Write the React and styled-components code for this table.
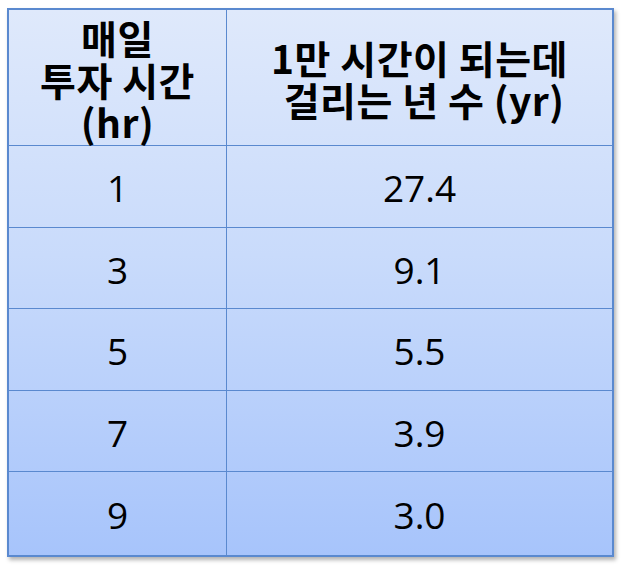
import React from 'react';
import styled, { createGlobalStyle } from 'styled-components';

const GlobalStyle = createGlobalStyle`
    body {
        margin: 0;
        background: #ffffff;
    }
`;

const Page = styled.div`
    width: 622px;
    height: 569px;
    padding: 8px 0 0 7px;
    box-sizing: border-box;
`;

const Grid = styled.div`
    width: 607px;
    height: 549px;
    box-sizing: border-box;
    border: 2px solid #5a89cf;
    display: grid;
    grid-template-columns: 218px 1fr;
    grid-template-rows: 136px 82px 81px 82px 81px 1fr;
    background: linear-gradient(180deg, #dfe9fb 0%, #c9dbfb 45%, #a7c4fb 100%);
    box-shadow: 2px 3px 4px rgba(0, 0, 0, 0.3);
`;

const Cell = styled.div`
    display: flex;
    align-items: center;
    justify-content: center;
    text-align: center;
    box-sizing: border-box;
    border-right: ${p => (p.last ? 'none' : '1px solid #5a89cf')};
    border-bottom: ${p => (p.bottom ? 'none' : '1px solid #5a89cf')};
    overflow: visible;
    color: #000;
`;

const HeadText = styled.div`
    font-family: "Noto Sans CJK KR", "Noto Sans", sans-serif;
    font-weight: 700;
    font-size: 39px;
    letter-spacing: 0.5px;
    line-height: 42px;
    padding-top: ${p => (p.wide ? '0' : '2px')};
    white-space: pre;
`;

const Value = styled.span`
    font-family: "Open Sans", "Noto Sans", sans-serif;
    font-size: 37px;
    line-height: 1;
    padding-top: 2px;
`;

const rows = [
    ['1', '27.4'],
    ['3', '9.1'],
    ['5', '5.5'],
    ['7', '3.9'],
    ['9', '3.0'],
];

export default function App() {
    return (
        <Page>
            <GlobalStyle />
            <Grid>
                <Cell>
                    <HeadText>{'매일\n투자 시간\n(hr)'}</HeadText>
                </Cell>
                <Cell last>
                    <HeadText wide>{'1만 시간이 되는데\n 걸리는 년 수 (yr)'}</HeadText>
                </Cell>
                {rows.map(([hours, years], i) => (
                    <React.Fragment key={hours}>
                        <Cell bottom={i === rows.length - 1}>
                            <Value>{hours}</Value>
                        </Cell>
                        <Cell last bottom={i === rows.length - 1}>
                            <Value>{years}</Value>
                        </Cell>
                    </React.Fragment>
                ))}
            </Grid>
        </Page>
    );
}
